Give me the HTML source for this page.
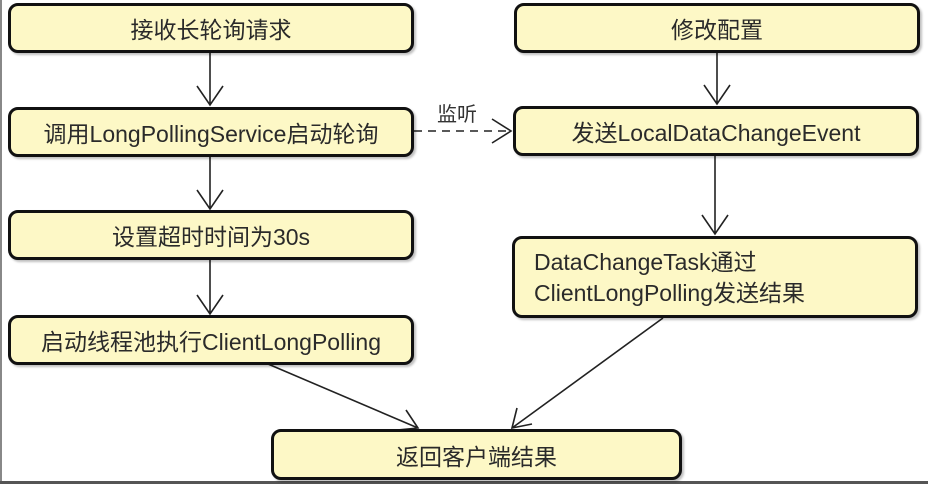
<!DOCTYPE html>
<html><head><meta charset="utf-8"><style>
html,body{margin:0;padding:0;background:#fff;}
body{width:928px;height:484px;position:relative;overflow:hidden;font-family:"Liberation Sans","Noto Sans CJK SC",sans-serif;}
.b{position:absolute;box-sizing:border-box;border:3px solid #111;border-radius:10px;background:#fdf8c6;box-shadow:2px 2px 2px rgba(0,0,0,.25);font-size:23px;color:#2a2a2a;display:flex;align-items:center;justify-content:center;white-space:nowrap;}
.l{position:absolute;left:0;top:0;width:2px;height:484px;background:#888;}
.bt{position:absolute;left:0;top:481px;width:928px;height:3px;background:#555;}
svg{position:absolute;left:0;top:0;}
</style></head><body>
<div class="l"></div><div class="bt"></div>
<svg width="928" height="484" fill="none" stroke="#222" stroke-width="1.6">
<path d="M210 52V105M197 86L210 105L223 86"/>
<path d="M210 157V209M197 190L210 209L223 190"/>
<path d="M210 260V314M197 295L210 314L223 295"/>
<path d="M717 52V104M704 85L717 104L730 85"/>
<path d="M715 156V234M702 215L715 234L728 215"/>
<path d="M414 131H510" stroke-dasharray="8,6"/>
<path d="M492 119L511 131L492 143"/>
<path d="M268 364L418 428M406 410L418 428L397 430"/>
<path d="M663 318L512 428M517 408L512 428L532 424"/>
</svg>
<div style="position:absolute;left:437px;top:98px;font-size:20px;color:#333;">监听</div>
<div class="b" style="left:8px;top:3px;width:406px;height:50px;">接收长轮询请求</div>
<div class="b" style="left:8px;top:107px;width:406px;height:50px;">调用LongPollingService启动轮询</div>
<div class="b" style="left:8px;top:210px;width:406px;height:50px;">设置超时时间为30s</div>
<div class="b" style="left:8px;top:315px;width:406px;height:50px;">启动线程池执行ClientLongPolling</div>
<div class="b" style="left:514px;top:3px;width:406px;height:50px;">修改配置</div>
<div class="b" style="left:513px;top:106px;width:406px;height:50px;">发送LocalDataChangeEvent</div>
<div class="b" style="left:512px;top:236px;width:406px;height:82px;padding-left:19px;line-height:31px;display:block;padding-top:8px;">DataChangeTask通过<br>ClientLongPolling发送结果</div>
<div class="b" style="left:271px;top:429px;width:411px;height:51px;">返回客户端结果</div>
</body></html>
